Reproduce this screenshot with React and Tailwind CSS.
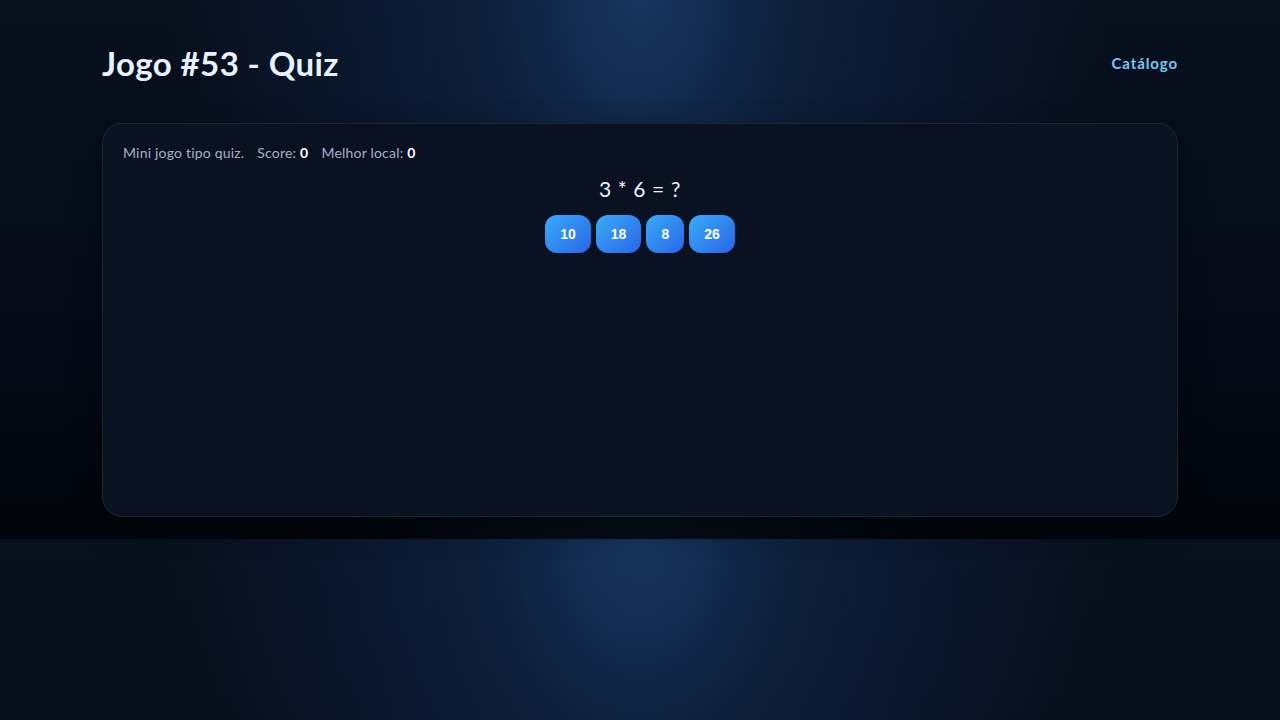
export default function App() {
  const font = { fontFamily: 'Lato, "Open Sans", sans-serif' };
  const options = [10, 18, 8, 26];
  return (
    <div
      className="min-h-[720px] w-full bg-[#050b16] bg-[radial-gradient(ellipse_470px_660px_at_50%_0%,#17355f_0%,rgba(15,34,66,0.75)_35%,rgba(5,11,22,0)_100%),linear-gradient(180deg,#07101d_0%,#050c18_50%,#02050b_100%)] bg-[length:100%_539px] bg-repeat-y text-white"
      style={font}
    >
      <div className="mx-auto max-w-[1100px] px-3 pt-10 pb-[22px]">
        <header className="flex h-[46px] items-center justify-between">
          <h1 className="text-[33px] font-bold leading-none tracking-[0.4px] text-[#e8f1ff]">Jogo #53 - Quiz</h1>
          <a className="text-[15px] font-bold tracking-[0.9px] text-[#76c8f8]">Catálogo</a>
        </header>
        <main className="mt-[37px] h-[394px] rounded-[20px] border border-[#1c2638] bg-[#0a1120] px-5 pt-5 shadow-[0_10px_30px_rgba(0,0,0,0.35)]">
          <div className="flex gap-[13px] text-[14px] leading-[18px] tracking-[0.2px] text-[#a3b2c8]">
            <span>Mini jogo tipo quiz.</span>
            <span>
              Score: <b className="text-white">0</b>
            </span>
            <span>
              Melhor local: <b className="text-white">0</b>
            </span>
          </div>
          <div className="mt-[15px] text-center text-[21px] leading-[24px] tracking-[0.6px] text-[#eef4ff]">3 * 6 = ?</div>
          <div className="mt-[14px] flex justify-center gap-[5px]">
            {options.map((o) => (
              <button
                key={o}
                className="h-[38px] rounded-[12px] bg-[linear-gradient(135deg,#3aaaf9,#2866e8)] px-[15px] text-[14px] font-bold text-white"
                style={{ fontFamily: '"Liberation Sans", Arial, sans-serif' }}
              >
                {o}
              </button>
            ))}
          </div>
        </main>
      </div>
    </div>
  );
}
